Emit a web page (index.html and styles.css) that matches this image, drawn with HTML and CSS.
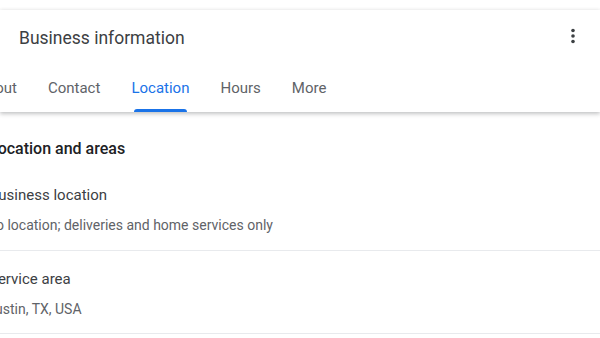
FILE: index.html
```html
<!DOCTYPE html>
<html lang="en">
<head>
    <meta charset="UTF-8">
    <meta name="viewport" content="width=device-width, initial-scale=1.0">
    <title>Business information</title>
    <link rel="stylesheet" href="styles.css">
</head>
<body>
    <div class="card">
        <div class="header">
            <h1>Business information</h1>
            <button class="menu" aria-label="More options">
                <svg width="24" height="24" viewBox="0 0 24 24">
                    <circle cx="12" cy="6.5" r="1.8" fill="#3c4043"/>
                    <circle cx="12" cy="12" r="1.8" fill="#3c4043"/>
                    <circle cx="12" cy="17.5" r="1.8" fill="#3c4043"/>
                </svg>
            </button>
        </div>
        <ul class="tabs">
            <li>About</li>
            <li>Contact</li>
            <li class="active">Location</li>
            <li>Hours</li>
            <li>More</li>
        </ul>
    </div>

    <div class="content">
        <h2>Location and areas</h2>
        <div class="item">
            <div class="item-title">Business location</div>
            <div class="item-value">No location; deliveries and home services only</div>
        </div>
        <div class="item">
            <div class="item-title">Service area</div>
            <div class="item-value">Austin, TX, USA</div>
        </div>
    </div>
</body>
</html>
```

FILE: styles.css
```css
body {
    margin: 0;
    padding: 0;
    background: #fff;
    font-family: Roboto, "Noto Sans", Arial, sans-serif;
    color: #3c4043;
    overflow: hidden;
}

.card {
    margin-top: 10px;
    background: #fff;
    box-shadow: 0 2px 4px rgba(60, 64, 67, 0.3), 0 -1px 3px rgba(60, 64, 67, 0.06);
    position: relative;
    z-index: 1;
}

.header {
    display: flex;
    align-items: center;
    justify-content: space-between;
    height: 56px;
    padding: 0 16px 0 19px;
}

.header h1 {
    margin: 0;
    font-size: 17.5px;
    font-weight: 400;
    color: #3c4043;
}

.menu {
    border: none;
    background: none;
    padding: 0;
    width: 24px;
    height: 24px;
    margin-right: -1px;
    margin-top: -4px;
}

.tabs {
    list-style: none;
    margin: 0 0 0 -38.5px;
    padding: 0;
    display: flex;
    height: 46px;
}

.tabs li {
    padding: 0 15.5px;
    font-size: 15px;
    color: #5f6368;
    line-height: 44px;
    position: relative;
}

.tabs li.active {
    color: #1a73e8;
}

.tabs li.active::after {
    content: "";
    position: absolute;
    left: 18px;
    right: 18px;
    bottom: 0;
    height: 3px;
    background: #1a73e8;
    border-radius: 3px 3px 0 0;
}

.content {
    margin-left: -11px;
}

.content h2 {
    margin: 0;
    padding: 27px 0 0 0;
    font-size: 16px;
    font-weight: 500;
    color: #202124;
    line-height: 20px;
}

.item {
    border-bottom: 1px solid #e8eaed;
    padding: 26px 0 15px 0;
}

.item + .item {
    padding-top: 18px;
    padding-bottom: 14px;
}

.item-title {
    font-size: 15px;
    line-height: 20px;
    color: #3c4043;
}

.item-value {
    margin: 10px 0 0 -3px;
    font-size: 14px;
    line-height: 20px;
    color: #5f6368;
}
```
